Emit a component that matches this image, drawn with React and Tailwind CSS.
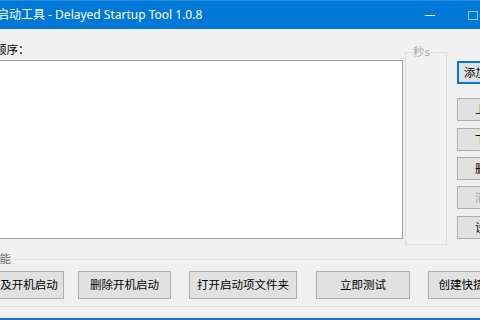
import React from 'react';

const font = { fontFamily: '"Noto Sans", "Noto Sans CJK SC", sans-serif' };

const SideButton = ({ label, focused, disabled, top }) => {
  return (
    <button
      className={
        'w-[80px] h-[23px] shrink-0 bg-[#e1e1e1] flex items-center text-[11.5px] leading-none ' +
        (focused ? 'border-2 border-[#0078d7] pl-[5px] ' : 'border border-[#adadad] pl-[17px] ') +
        (disabled ? 'text-[#a0a0a0] ' : 'text-black ') +
        top
      }
    >
      <span className="whitespace-nowrap">{label}</span>
    </button>
  );
};

const BottomButton = ({ label, width, ml }) => {
  return (
    <button
      className={
        'h-[28px] shrink-0 bg-[#e1e1e1] border border-[#adadad] flex items-center justify-center text-[11.5px] leading-none text-black ' +
        width + ' ' + ml
      }
    >
      <span className="whitespace-nowrap">{label}</span>
    </button>
  );
};

const App = () => {
  return (
    <div className="w-[480px] h-[320px] overflow-hidden bg-[#f0f0f0] flex flex-col" style={font}>
      {/* title bar */}
      <div className="h-[29px] shrink-0 bg-[#0078d7] border-t border-[#2a8ce0] flex items-center text-white text-[12px]">
        <span className="ml-[-3px] whitespace-nowrap leading-none pb-[1px]">启动工具 - Delayed Startup Tool 1.0.8</span>
        <div className="ml-auto mr-[33px] w-[10px] h-[1px] bg-white" />
        <div className="mr-[2px] w-[10px] h-[9px] border border-[#9cc9ef]" />
      </div>

      {/* top section */}
      <div className="h-[230px] shrink-0 flex items-start">
        <div className="ml-[-5px] w-[408px] shrink-0 flex flex-col">
          <div className="mt-[14px] h-[14px] text-[11.5px] leading-[14px] text-black whitespace-nowrap">顺序：</div>
          <div className="mt-[3px] h-[179px] bg-white border border-[#a0a0a0]" />
        </div>

        <div className="ml-[2px] mt-[23px] w-[42px] h-[193px] shrink-0 border border-[#dcdcdc] relative">
          <span className="absolute left-[6px] top-[-8px] px-[1px] bg-[#f0f0f0] text-[11.5px] leading-[14px] text-[#a8a8a8] whitespace-nowrap">秒s</span>
        </div>

        <div className="ml-[10px] shrink-0 flex flex-col">
          <SideButton label="添加" focused top="mt-[32px]" />
          <SideButton label="上移" top="mt-[14px]" />
          <SideButton label="下移" top="mt-[7px]" />
          <SideButton label="删除" top="mt-[6px]" />
          <SideButton label="清空" disabled top="mt-[6px]" />
          <SideButton label="设置" top="mt-[7px]" />
        </div>
      </div>

      {/* bottom group */}
      <div className="ml-[-40px] w-[560px] h-[48px] shrink-0 border-t border-b border-[#dcdcdc] relative">
        <span className="absolute left-[28px] top-[-8px] pr-[2px] bg-[#f0f0f0] text-[11.5px] leading-[14px] text-[#6b6b6b] whitespace-nowrap">功能</span>
        <div className="flex pl-[11px] mt-[11px]">
          <BottomButton label="保存及开机启动" width="w-[93px]" ml="" />
          <BottomButton label="删除开机启动" width="w-[93px]" ml="ml-[14px]" />
          <BottomButton label="打开启动项文件夹" width="w-[108px]" ml="ml-[18px]" />
          <BottomButton label="立即测试" width="w-[94px]" ml="ml-[19px]" />
          <BottomButton label="创建快捷方式" width="w-[90px]" ml="ml-[18px]" />
        </div>
      </div>

      <div className="mt-[11px] h-[2px] shrink-0 bg-[#1f6fbf]" />
    </div>
  );
};

export default App;
